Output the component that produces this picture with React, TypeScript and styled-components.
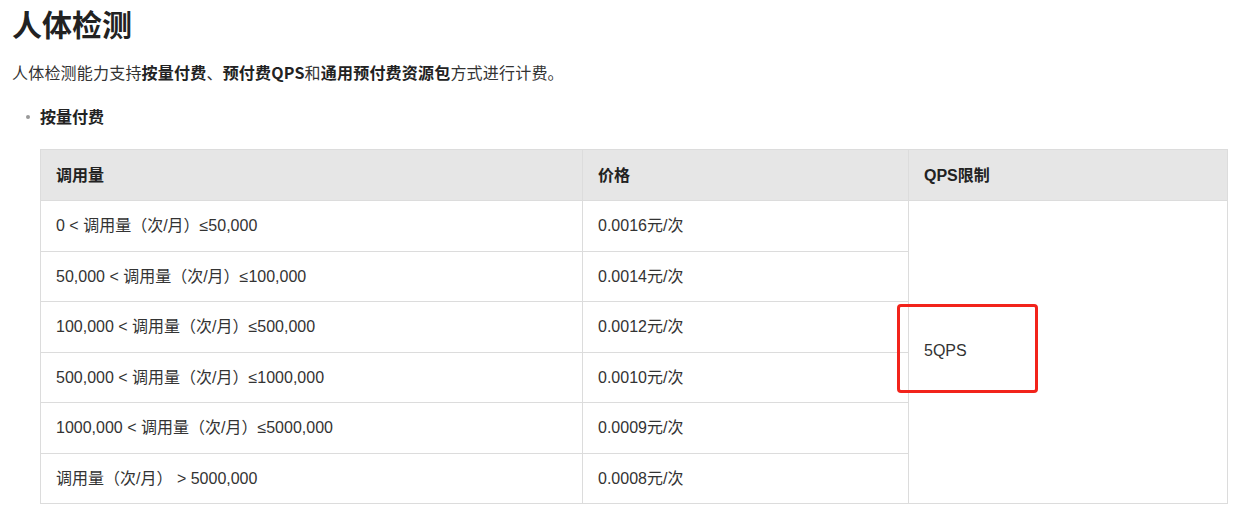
import { createGlobalStyle, styled } from "styled-components";

const GlobalStyle = createGlobalStyle`
  body {
    margin: 0;
    background: #fff;
    color: #333;
    font-family: "Liberation Sans", "Noto Sans CJK SC", sans-serif;
  }
`;

const Page = styled.div`
  padding: 0 23px 0 12px;
`;

const Title = styled.h1`
  margin: 0;
  padding-top: 4px;
  font-size: 30px;
  line-height: 38px;
  font-weight: 700;
  color: #222;
  font-family: "Noto Sans CJK SC", sans-serif;
`;

const Intro = styled.p`
  margin: 16px 0 0;
  font-size: 16px;
  line-height: 28px;
  letter-spacing: 0.2px;
  color: #333;
  font-family: "Noto Sans CJK SC", sans-serif;
  b {
    font-weight: 700;
    color: #222;
  }
`;

const List = styled.ul`
  margin: 16px 0 0;
  padding: 0 0 0 28px;
  list-style: none;
`;

const Item = styled.li`
  position: relative;
  font-size: 16px;
  line-height: 28px;
  font-weight: 700;
  color: #222;
  font-family: "Noto Sans CJK SC", sans-serif;
  &::before {
    content: "";
    position: absolute;
    left: -14px;
    top: 13px;
    width: 4px;
    height: 4px;
    border-radius: 50%;
    background: #999;
  }
`;

const Table = styled.table`
  margin: 19px 0 0 28px;
  width: 1187px;
  table-layout: fixed;
  border-collapse: collapse;
  font-family: "Liberation Sans", "Noto Sans CJK SC", sans-serif;
`;

const Col = styled.col<{ $w: number }>`
  width: ${(p) => p.$w}px;
`;

const Th = styled.th`
  height: 47px;
  padding: 0 15px 3px;
  background: #e6e6e6;
  border: 1px solid #dcdcdc;
  text-align: left;
  font-size: 16px;
  font-weight: 700;
  color: #222;
`;

const Td = styled.td`
  height: 46.5px;
  padding: 0 15px 3px;
  border: 1px solid #dcdcdc;
  font-size: 16px;
  color: #333;
  vertical-align: middle;
  white-space: nowrap;
`;

const QpsCell = styled(Td)`
  position: relative;
`;

const Highlight = styled.div`
  position: absolute;
  left: -12px;
  top: 50%;
  margin-top: -48px;
  width: 135px;
  height: 83px;
  border: 3px solid #f2231b;
  border-radius: 4px;
  pointer-events: none;
`;

const rows = [
  ["0 < 调用量（次/月）≤50,000", "0.0016元/次"],
  ["50,000 < 调用量（次/月）≤100,000", "0.0014元/次"],
  ["100,000 < 调用量（次/月）≤500,000", "0.0012元/次"],
  ["500,000 < 调用量（次/月）≤1000,000", "0.0010元/次"],
  ["1000,000 < 调用量（次/月）≤5000,000", "0.0009元/次"],
  ["调用量（次/月） > 5000,000", "0.0008元/次"],
];

export default function App() {
  return (
    <Page>
      <GlobalStyle />
      <Title>人体检测</Title>
      <Intro>
        人体检测能力支持<b>按量付费</b>、<b>预付费QPS</b>和<b>通用预付费资源包</b>方式进行计费。
      </Intro>
      <List>
        <Item>按量付费</Item>
      </List>
      <Table>
        <colgroup>
          <Col $w={542} />
          <Col $w={326} />
          <Col $w={319} />
        </colgroup>
        <thead>
          <tr>
            <Th>调用量</Th>
            <Th>价格</Th>
            <Th>QPS限制</Th>
          </tr>
        </thead>
        <tbody>
          {rows.map(([amount, price], i) => (
            <tr key={amount}>
              <Td>{amount}</Td>
              <Td>{price}</Td>
              {i === 0 && (
                <QpsCell rowSpan={rows.length}>
                  5QPS
                  <Highlight />
                </QpsCell>
              )}
            </tr>
          ))}
        </tbody>
      </Table>
    </Page>
  );
}
